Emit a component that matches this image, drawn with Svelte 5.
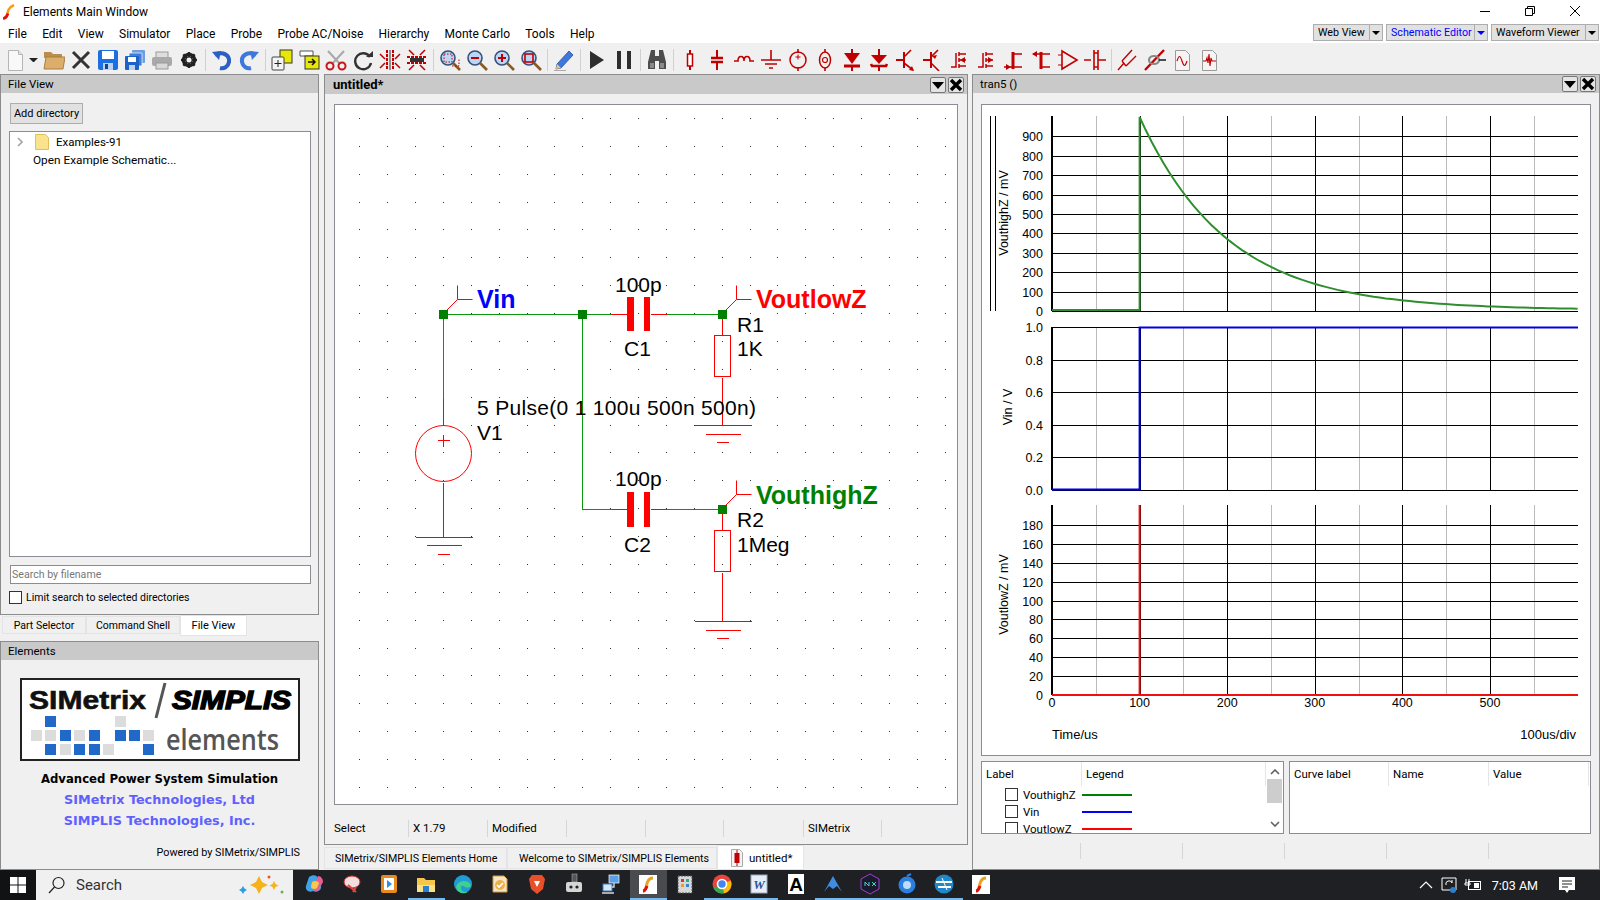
<script>
	const red = '#c00000';

	const toolIcons = {
		new: `<path d="M4.500 1.500h10l4 4v16h-14z" fill="#f8f8f8" stroke="#b5b5b5"/><path d="M14.500 1.500v4h4" fill="#e4e4e4" stroke="#b5b5b5"/>`,
		open: `<path d="M1 5V3h7l2 2h9v4H1z" fill="#b98f4f"/><path d="M1 20L3 8h19l-2 12z" fill="#dcae6b" stroke="#a97f43"/>`,
		close: `<path d="M3 3l16 16M19 3L3 19" stroke="#333" stroke-width="3"/>`,
		save: `<rect x="1" y="1" width="20" height="20" rx="2" fill="#1c6fe0"/><rect x="5" y="2" width="12" height="8" fill="#fff"/><rect x="6" y="14" width="10" height="7" fill="#bcd2ee"/><rect x="8" y="15" width="3" height="5" fill="#14418a"/>`,
		saveall: `<rect x="8" y="1" width="13" height="13" rx="1" fill="#6d9ee4"/><rect x="5" y="4" width="13" height="13" rx="1" fill="#3f7fd8" stroke="#fff" stroke-width=".7"/><rect x="1" y="7" width="14" height="14" rx="1" fill="#1c62c8"/><rect x="4" y="8" width="8" height="5" fill="#fff"/><rect x="5" y="16" width="6" height="5" fill="#bcd2ee"/>`,
		print: `<rect x="5" y="3" width="12" height="6" fill="#dedede" stroke="#999"/><rect x="1" y="8" width="20" height="9" rx="2" fill="#a9a9a9"/><rect x="5" y="14" width="12" height="6" fill="#d8d8d8" stroke="#999"/>`,
		gear: `<circle cx="11" cy="11" r="5.500" fill="none" stroke="#222" stroke-width="3.500"/><path d="M11 3v16M3 11h16M5.300 5.300l11.400 11.400M16.700 5.300L5.300 16.700" stroke="#222" stroke-width="2.400"/><circle cx="11" cy="11" r="2.500" fill="#f0f0f0"/>`,
		undo: `<path d="M4 6c8-4 15 0 14 7-1 5-5 7-9 6" fill="none" stroke="#2a5fc4" stroke-width="4"/><path d="M1 3l9-1-2 9z" fill="#2a5fc4"/>`,
		redo: `<path d="M18 6c-8-4-15 0-14 7 1 5 5 7 9 6" fill="none" stroke="#3f78dc" stroke-width="4"/><path d="M21 3l-9-1 2 9z" fill="#3f78dc"/>`,
		addpart: `<rect x="9" y="1" width="12" height="13" fill="#e8e800" stroke="#333"/><rect x="1" y="8" width="12" height="13" rx="1" fill="#f4f4f4" stroke="#444"/><path d="M7 11v7M3.500 14.500h7" stroke="#222"/>`,
		movepart: `<path d="M2 2h13v5H2z" fill="#fff" stroke="#555"/><rect x="7" y="7" width="14" height="13" fill="#e8e800" stroke="#333"/><path d="M10 13h6m-2-3l3 3-3 3" fill="none" stroke="#111" stroke-width="1.500"/>`,
		cut: `<path d="M3 2l12 13M19 2L7 15" stroke="#a8a8a8" stroke-width="2"/><circle cx="5" cy="17" r="3.500" fill="none" stroke="#c8161d" stroke-width="2"/><circle cx="17" cy="17" r="3.500" fill="none" stroke="#c8161d" stroke-width="2"/>`,
		rotate: `<path d="M18 8a8 8 0 1 0 1 6" fill="none" stroke="#333" stroke-width="2.400"/><path d="M14 8h7V2z" fill="#333"/>`,
		flipv: `<path d="M8 1v20M14 1v20" stroke="${red}" stroke-width="2" stroke-dasharray="3 1"/><path d="M1 5l5 5M1 19l5-5M21 5l-5 5M21 19l-5-5" stroke="${red}" stroke-width="1.500"/><path d="M11 1v20" stroke="#333"/>`,
		fliph: `<path d="M1 8h20M1 14h20" stroke="${red}" stroke-width="2" stroke-dasharray="3 1"/><path d="M3 1l5 5M19 1l-5 5M3 21l5-5M19 21l-5-5" stroke="${red}" stroke-width="1.500"/><rect x="4" y="9" width="14" height="4" fill="#333"/>`,
		zoomfit: `<circle cx="9" cy="9" r="7" fill="#bcd6f6" stroke="#36507a" stroke-width="1.600"/><path d="M14 14l7 7" stroke="#8a5a20" stroke-width="2.600"/><rect x="5" y="5" width="8" height="8" fill="none" stroke="${red}" stroke-dasharray="1.500 1.500"/><path d="M13 17h7V9" fill="none" stroke="${red}" stroke-dasharray="1.500 1.500"/>`,
		zoomout: `<circle cx="9" cy="9" r="7" fill="#bcd6f6" stroke="#36507a" stroke-width="1.600"/><path d="M14 14l7 7" stroke="#8a5a20" stroke-width="2.600"/><path d="M5 9h8" stroke="${red}" stroke-width="2"/>`,
		zoomin: `<circle cx="9" cy="9" r="7" fill="#bcd6f6" stroke="#36507a" stroke-width="1.600"/><path d="M14 14l7 7" stroke="#8a5a20" stroke-width="2.600"/><path d="M5 9h8M9 5v8" stroke="${red}" stroke-width="2"/>`,
		zoomarea: `<circle cx="9" cy="9" r="7" fill="#bcd6f6" stroke="#36507a" stroke-width="1.600"/><path d="M14 14l7 7" stroke="#8a5a20" stroke-width="2.600"/><rect x="5" y="5" width="8" height="8" fill="none" stroke="${red}" stroke-width="1.600"/>`,
		pencil: `<path d="M4 15L16 2l4 4L8 19l-5 1z" fill="#3f78dc" stroke="#274f97" stroke-width=".8"/><path d="M4 15l4 4-5 1z" fill="#e9c48c"/><path d="M1 21.500h12" stroke="#aaa"/>`,
		play: `<path d="M4 2l14 9-14 9z" fill="#2e2e2e"/>`,
		pause: `<path d="M4 2h4v18H4zM14 2h4v18h-4z" fill="#2e2e2e"/>`,
		find: `<path d="M5 1h4v6h4V1h4l3 12v7h-7v-8H9v8H2v-7z" fill="#4d4d4d"/><path d="M4 14h4v5H4zM14 14h4v5h-4z" fill="#8a8a8a"/>`,
		res: `<path d="M11 1v4M11 17v4" stroke="${red}" stroke-width="2"/><rect x="8.500" y="5" width="5" height="12" fill="#fff" stroke="${red}" stroke-width="1.500"/>`,
		cap: `<path d="M11 1v8M11 13v8" stroke="${red}" stroke-width="2"/><path d="M5 9h12M5 13h12" stroke="${red}" stroke-width="2.400"/>`,
		ind: `<path d="M1 12h4c0-6 6-6 6 0 0-6 6-6 6 0h4" fill="none" stroke="${red}" stroke-width="1.600"/>`,
		gnd: `<path d="M11 1v10M1 11h20M5 15h12M9 19h4" stroke="${red}" stroke-width="1.600"/>`,
		vsrc: `<path d="M11 0v4M11 18v4" stroke="${red}" stroke-width="1.600"/><circle cx="11" cy="11" r="8" fill="none" stroke="${red}" stroke-width="1.500"/><path d="M8.500 8h5M11 5.500v5" stroke="${red}"/>`,
		isrc: `<path d="M11 0v3M11 19v3" stroke="${red}" stroke-width="1.600"/><ellipse cx="11" cy="11" rx="5.500" ry="8" fill="none" stroke="${red}" stroke-width="1.500"/><circle cx="11" cy="11" r="2.500" fill="none" stroke="${red}" stroke-width="1.200"/>`,
		dio: `<path d="M11 0v4M11 17v5" stroke="${red}" stroke-width="2"/><path d="M3 4h16l-8 11z" fill="${red}"/><path d="M3 17h16" stroke="${red}" stroke-width="3"/>`,
		zen: `<path d="M11 0v6M11 17v5" stroke="${red}" stroke-width="2"/><path d="M3 6h16l-8 9z" fill="${red}"/><path d="M3 15l1 2h14l1-2" fill="none" stroke="${red}" stroke-width="2.600"/>`,
		npn: `<path d="M1 11h8M9 3v16" stroke="${red}" stroke-width="2"/><path d="M9 8l7-7M9 14l9 7" stroke="${red}" stroke-width="1.600"/><path d="M19 22l-5-1 3-4z" fill="${red}"/>`,
		pnp: `<path d="M1 11h8M9 3v16" stroke="${red}" stroke-width="2"/><path d="M9 8l7-7M9 14l8 8" stroke="${red}" stroke-width="1.600"/><path d="M10 7l5-1-2 4z" fill="${red}"/>`,
		nmos: `<path d="M2 18h5V4M10 3v4M10 9v4M10 15v4M10 5h7M10 17h7M10 11h7" stroke="${red}" stroke-width="1.500" fill="none"/><path d="M11 11l5-3v6z" fill="${red}"/>`,
		pmos: `<path d="M2 18h5V4M10 3v4M10 9v4M10 15v4M10 5h7M10 17h7M10 11h7" stroke="${red}" stroke-width="1.500" fill="none"/><path d="M17 11l-5-3v6z" fill="${red}"/>`,
		pjf: `<path d="M1 18h9M10 5h9M10 18h9" stroke="${red}" stroke-width="1.600" fill="none"/><path d="M10 3v17" stroke="${red}" stroke-width="3"/><path d="M8 18l-5-3v6z" fill="${red}"/>`,
		njf: `<path d="M3 5h8M11 5h9M11 18h9" stroke="${red}" stroke-width="1.600"/><path d="M11 3v17" stroke="${red}" stroke-width="3"/><path d="M2 5l5-3v6zM6 5v5" fill="${red}"/>`,
		amp: `<path d="M5 2l15 9-15 9z" fill="none" stroke="${red}" stroke-width="1.600"/><path d="M1 6h4M1 16h4" stroke="${red}" stroke-width="1.200"/>`,
		sw: `<path d="M0 11h7M10 1v20M14 1v20M14 11h8M10 4h4M10 18h4" stroke="${red}" stroke-width="1.600"/>`,
		probe: `<path d="M1 21l6-7M5 12L15 1M9 17L19 7M5 12l4 5" fill="none" stroke="${red}" stroke-width="1.400"/>`,
		probe2: `<path d="M1 21L20 1" stroke="${red}" stroke-width="2.400"/><ellipse cx="10" cy="11" rx="5" ry="4" fill="none" stroke="#888" stroke-width="2.200"/><path d="M15 11h7" stroke="#222" stroke-width="1.600"/>`,
		wave: `<path d="M4.500 1.500h10l4 4v16h-14z" fill="#f4f4f4" stroke="#9a9a9a"/><path d="M6 12c2-6 3-6 5 0s3 6 5 0" fill="none" stroke="${red}" stroke-width="1.200"/>`,
		fft: `<path d="M4.500 1.500h10l4 4v16h-14z" fill="#f4f4f4" stroke="#9a9a9a"/><path d="M5 12h3l1-3 1 5 1-9 1 12 1-8 1 3h4" fill="none" stroke="${red}" stroke-width="1.100"/>`
	};

	const toolbar = [
		'new', 'drop', 'gap', 'open', 'close', 'save', 'saveall', 'print', 'gear', '|',
		'undo', 'redo', '|',
		'addpart', 'movepart', 'cut', 'rotate', 'flipv', 'fliph', '|',
		'zoomfit', 'zoomout', 'zoomin', 'zoomarea', '|',
		'pencil', '|', 'play', 'pause', '|', 'find', '|',
		'res', 'cap', 'ind', 'gnd', 'vsrc', 'isrc', 'dio', 'zen', 'npn', 'pnp', 'nmos', 'pmos', 'pjf', 'njf', 'amp', 'sw', '|',
		'probe', 'probe2', 'wave', 'fft'
	];

	const menus = ['File', 'Edit', 'View', 'Simulator', 'Place', 'Probe', 'Probe AC/Noise', 'Hierarchy', 'Monte Carlo', 'Tools', 'Help'];

	// schematic, all in page coordinates (viewBox lines up with the page)
	const dots = [];
	for (let y = 118; y < 800; y += 27.87) {
		for (let x = 359.4; x < 950; x += 27.87) dots.push([Math.round(x), Math.round(y)]);
	}

	const greenWires = [
		[443, 314, 611, 314], [443, 314, 443, 398], [582, 314, 582, 509], [582, 509, 611, 509],
		[666, 314, 722, 314], [666, 509, 722, 509]
	];
	const redWires = [
		[611, 314, 628, 314], [650, 314, 666, 314], [611, 509, 628, 509], [650, 509, 666, 509],
		[443, 398, 443, 425], [443, 482, 443, 537],
		[415, 537, 472, 537], [426, 545, 461, 545], [437, 554, 449, 554], [437, 440, 449, 440], [443, 434, 443, 446],
		[722, 314, 722, 335], [722, 377, 722, 425], [694, 425, 751, 425], [705, 434, 740, 434], [716, 442, 728, 442],
		[722, 509, 722, 530], [722, 572, 722, 621], [694, 621, 751, 621], [705, 630, 740, 630], [716, 638, 728, 638]
	];
	const junctions = [[443, 314], [582, 314], [722, 314], [722, 509]];
	const flags = [[443, 314], [722, 314], [722, 509]];

	// plots
	const x0 = 1052;
	const xStep = 87.6;
	const xEnd = 1578;
	const plots = [
		{
			top: 116, bottom: 311, label: 'VouthighZ / mV', labelX: 1004, labelY: 213,
			ticks: [900, 800, 700, 600, 500, 400, 300, 200, 100, 0].map((v) => ({ v: String(v), y: 311 - v * 0.194 }))
		},
		{
			top: 327, bottom: 490, label: 'Vin / V', labelX: 1008, labelY: 407,
			ticks: [1, 0.8, 0.6, 0.4, 0.2, 0].map((v) => ({ v: v.toFixed(1), y: 490 - v * 163 }))
		},
		{
			top: 505, bottom: 695, label: 'VoutlowZ / mV', labelX: 1004, labelY: 594.5,
			ticks: [180, 160, 140, 120, 100, 80, 60, 40, 20, 0].map((v) => ({ v: String(v), y: 695 - v * 0.944 }))
		}
	];
	const majors = [0, 1, 2, 3, 4, 5].map((i) => x0 + i * xStep);
	const minors = [0, 1, 2, 3, 4, 5, 6].map((i) => x0 + (i - 0.5) * xStep).filter((x) => x > x0);

	const x100 = x0 + xStep;
	let decay = `M${x0} 310 L${x100} 310 L${x100} 117`;
	for (let x = x100; x <= xEnd; x += 6) {
		decay += ` L${x.toFixed(1)} ${(310 - 193 * Math.exp(-(x - x100) / xStep)).toFixed(1)}`;
	}

	const legend = [
		{ name: 'VouthighZ', color: '#008000' },
		{ name: 'Vin', color: '#0000ff' },
		{ name: 'VoutlowZ', color: '#ff0000' }
	];

	const logoSquares = [
		[25, 38, 1], [95, 38, 0],
		[11, 52, 0], [25, 52, 0], [40, 52, 1], [54, 52, 0], [69, 52, 1], [95, 52, 1], [109, 52, 1], [123, 52, 0],
		[25, 66, 1], [40, 66, 0], [54, 66, 1], [69, 66, 1], [83, 66, 0], [123, 66, 1]
	];

	const taskIcons = {
		copilot: `<path d="M5 4c4-3 8-2 9 1l3 8c1 4-4 7-8 5-4 2-8-1-7-5z" fill="#3fa3e8"/><path d="M14 3c3 0 5 3 5 6l-5 9c-3 1-5-1-5-3z" fill="#e9608f"/><path d="M8 9c3-2 6-1 7 1l-2 5c-2 2-5 1-6-1z" fill="#f7c948"/>`,
		a1: `<ellipse cx="11" cy="9" rx="8" ry="6" fill="#f3dede" stroke="#c33"/><path d="M7 12l8 7M15 14l-3 5" stroke="#d44" stroke-width="2"/>`,
		a2: `<rect x="3" y="2" width="16" height="18" rx="2" fill="#e88a1e"/><rect x="6" y="5" width="10" height="12" fill="#fff"/><path d="M9 7l5 4-5 4z" fill="#2a8fe0"/>`,
		files: `<path d="M2 5h7l2 2h9v12H2z" fill="#f6c64a"/><rect x="2" y="12" width="18" height="7" fill="#fbe08a"/><rect x="8" y="13" width="6" height="6" fill="#2a7fd0"/>`,
		edge: `<circle cx="11" cy="11" r="9" fill="#1f9bd6"/><path d="M4 14c2-7 12-8 15-2 0 3-4 3-6 2-2-2-5-2-4 2 1 3 5 4 8 2-4 4-11 3-13-4z" fill="#3fcf8e"/>`,
		mail: `<path d="M4 3h11l3 3v13H4z" fill="#f3e6c8" stroke="#d79a3c"/><circle cx="11" cy="12" r="5" fill="#e9b24a"/><path d="M8 12l2 2 4-4" stroke="#fff" stroke-width="1.600" fill="none"/>`,
		brave: `<path d="M6 2h10l3 4-2 10-6 5-6-5-2-10z" fill="#e8502a"/><path d="M8 8h6l-3 6z" fill="#fff"/>`,
		usb: `<rect x="9" y="1" width="5" height="8" fill="#555" stroke="#bbb" stroke-width=".5"/><rect x="3" y="9" width="16" height="10" rx="2" fill="#d5d5d5"/><circle cx="8" cy="14" r="1.600" fill="#222"/><circle cx="14" cy="14" r="1.600" fill="#222"/>`,
		net: `<rect x="9" y="2" width="10" height="8" fill="#5aa0e8" stroke="#fff" stroke-width=".7"/><rect x="3" y="11" width="9" height="7" fill="#d7e8fa" stroke="#3a7cc8"/><path d="M14 10v4h-2M2 20h12" stroke="#d8d8d8" stroke-width="1.400" fill="none"/>`,
		simetrix: `<rect x="2" y="2" width="18" height="19" fill="#fff"/><path d="M6 18c4-1 3-7 5-10 1-2 3-3 5-3" fill="none" stroke="#e8a21e" stroke-width="3"/><path d="M6 18c2 0 3-2 4-5" fill="none" stroke="#e01010" stroke-width="3"/>`,
		chip: `<rect x="4" y="3" width="14" height="17" fill="#d8d8d8" stroke="#555" stroke-dasharray="2 1"/><rect x="7" y="6" width="3" height="3" fill="#d33"/><rect x="12" y="6" width="3" height="3" fill="#3a8"/><rect x="7" y="11" width="3" height="3" fill="#e93"/><rect x="12" y="11" width="3" height="3" fill="#38c"/>`,
		chrome: `<circle cx="11" cy="11" r="9.500" fill="#e8453c"/><path d="M11 11L2.500 15A9.500 9.500 0 0 0 13 20.300z" fill="#34a853"/><path d="M11 11l8.800-3.500A9.500 9.500 0 0 1 13 20.300z" fill="#fbbc05"/><circle cx="11" cy="11" r="4.500" fill="#4285f4" stroke="#fff" stroke-width="1.600"/>`,
		word: `<rect x="3" y="2" width="16" height="18" fill="#e8eef8" stroke="#9ab"/><text x="11" y="16" text-anchor="middle" font-family="Liberation Serif" font-style="italic" font-weight="700" font-size="13" fill="#2a5699">W</text>`,
		ai: `<rect x="3" y="1" width="16" height="20" fill="#fff"/><text x="11" y="18" text-anchor="middle" font-family="Liberation Sans" font-weight="700" font-size="19" fill="#000">A</text>`,
		nord: `<path d="M2 19L11 3l9 16-5-6-4 3-4-3z" fill="#3f8de0"/>`,
		nox: `<path d="M11 1l9 5v10l-9 5-9-5V6z" fill="#1a1a2e" stroke="#a040d0"/><path d="M6 13v-4l4 4V9M13 9l4 4M17 9l-4 4" stroke="#30e0c0" fill="none"/>`,
		ball: `<circle cx="11" cy="12" r="8.500" fill="#2a7fe0"/><circle cx="11" cy="12" r="4" fill="#bcdcf8"/><path d="M11 3l4-2" stroke="#2a7fe0" stroke-width="2"/>`,
		ssh: `<circle cx="11" cy="11" r="9.500" fill="#1e88c8"/><path d="M3 9h16M5 14h13" stroke="#fff" stroke-width="2"/><path d="M9 5l5 12" stroke="#fff"/>`
	};
	const taskbar = [
		['copilot', false, false], ['a1', false, false], ['a2', false, false], ['files', true, false], ['edge', false, false],
		['mail', false, false], ['brave', false, false], ['usb', false, false], ['net', false, false], ['simetrix', true, true],
		['chip', false, false], ['chrome', true, false], ['word', true, false], ['ai', false, false], ['nord', true, false],
		['nox', true, false], ['ball', true, false], ['ssh', true, false], ['simetrix', false, false]
	];
</script>

<div class="app">
	<header class="titlebar">
		<svg class="app-logo" viewBox="0 0 14 16" width="14" height="16">
			<path d="M2 14c4-1 3-6 5-9 1-2 3-3 5-4" fill="none" stroke="#f0a020" stroke-width="2.600" />
			<path d="M1 14.500c3 0 4-2 5-5" fill="none" stroke="#e01010" stroke-width="2.600" />
		</svg>
		<span class="title-text">Elements Main Window</span>
		<div class="win-controls">
			<svg viewBox="0 0 10 10" width="10" height="10"><path d="M0 5.500h10" stroke="#000" /></svg>
			<svg viewBox="0 0 10 10" width="10" height="10"><path d="M.5 2.500h7v7h-7zM2.500 2.500v-2h7v7h-2" fill="none" stroke="#000" /></svg>
			<svg viewBox="0 0 10 10" width="10" height="10"><path d="M0 0l10 10M10 0L0 10" stroke="#000" /></svg>
		</div>
	</header>

	<nav class="menubar">
		{#each menus as m}
			<span>{m}</span>
		{/each}
		<div class="views">
			<div class="view-btn web"><span>Web View</span><i></i></div>
			<div class="view-btn sch active"><span>Schematic Editor</span><i></i></div>
			<div class="view-btn wav"><span>Waveform Viewer</span><i></i></div>
		</div>
	</nav>

	<div class="toolbar">
		{#each toolbar as t}
			{#if t === '|'}
				<div class="sep"><b></b></div>
			{:else if t === 'gap'}
				<div class="tb-gap"></div>
			{:else if t === 'drop'}
				<div class="drop"></div>
			{:else}
				<div class="tool">
					<svg viewBox="0 0 22 22" width="22" height="22">{@html toolIcons[t]}</svg>
				</div>
			{/if}
		{/each}
	</div>

	<main class="main">
		<section class="left">
			<div class="panel fileview">
				<div class="panel-title">File View</div>
				<button class="add-dir">Add directory</button>
				<div class="tree">
					<div class="tree-row">
						<svg class="chev" viewBox="0 0 6 10" width="6" height="10"><path d="M1 1l4 4-4 4" fill="none" stroke="#a6a6a6" stroke-width="1.600" /></svg>
						<svg class="folder" viewBox="0 0 14 16" width="14" height="16"><path d="M.5.5h10l3 3v12H.5z" fill="#fbe38e" stroke="#e0c05c" /></svg>
						<span>Examples-91</span>
					</div>
					<div class="tree-open">Open Example Schematic...</div>
				</div>
				<div class="search">Search by filename</div>
				<label class="limit"><span class="check"></span>Limit search to selected directories</label>
			</div>

			<div class="left-tabs">
				<div class="ltab part">Part Selector</div>
				<div class="ltab shell">Command Shell</div>
				<div class="ltab on">File View</div>
			</div>

			<div class="panel elements">
				<div class="panel-title">Elements</div>
				<svg class="logo" viewBox="0 0 280 83" width="280" height="83">
					<rect x="1" y="1" width="278" height="81" fill="#fff" stroke="#222" stroke-width="2" />
					<text x="9" y="31" class="logo-a" textLength="117" lengthAdjust="spacingAndGlyphs">SIMetrix</text>
					<path d="M145 5l-9 35" stroke="#555" stroke-width="3" />
					<text x="152" y="31" class="logo-b" textLength="119" lengthAdjust="spacingAndGlyphs">SIMPLIS</text>
					{#each logoSquares as [x, y, on]}
						<rect {x} {y} width="11" height="11" fill={on ? '#2169c8' : '#dcdcdc'} />
					{/each}
					<text x="146" y="71.500" class="logo-c" textLength="113" lengthAdjust="spacingAndGlyphs">elements</text>
				</svg>
				<div class="tag bold">Advanced Power System Simulation</div>
				<div class="tag blue">SIMetrix Technologies, Ltd</div>
				<div class="tag blue second">SIMPLIS Technologies, Inc.</div>
				<div class="powered">Powered by SIMetrix/SIMPLIS</div>
			</div>
		</section>

		<section class="center">
			<div class="panel sch-panel">
				<div class="panel-title strong">
					<span>untitled*</span>
					<div class="dock">
						<span class="dock-btn"><svg viewBox="0 0 14 14" width="14" height="14"><path d="M1 4h12l-6 7z" fill="#000" /></svg></span>
						<span class="dock-btn"><svg viewBox="0 0 14 14" width="14" height="14"><path d="M2 2l10 10M12 2L2 12" stroke="#000" stroke-width="3.400" /></svg></span>
					</div>
				</div>
				<svg class="sch-canvas" viewBox="335 105 622 699" width="624" height="701">
					<g fill="#333">
						{#each dots as [x, y]}
							<rect {x} {y} width="1" height="1" />
						{/each}
					</g>
					<g shape-rendering="crispEdges">
						{#each greenWires as [x1, y1, x2, y2]}
							<line x1={x1 + 0.5} y1={y1 + 0.5} x2={x2 + 0.5} y2={y2 + 0.5} stroke="#0a960a" />
						{/each}
						{#each redWires as [x1, y1, x2, y2]}
							<line x1={x1 + 0.5} y1={y1 + 0.5} x2={x2 + 0.5} y2={y2 + 0.5} stroke="#f00" />
						{/each}
						<rect x="627" y="297" width="7" height="34" fill="#f00" />
						<rect x="644" y="297" width="6" height="34" fill="#f00" />
						<rect x="627" y="492" width="7" height="35" fill="#f00" />
						<rect x="644" y="492" width="6" height="35" fill="#f00" />
						<rect x="714.5" y="335.5" width="16" height="41" fill="none" stroke="#f00" />
						<rect x="714.5" y="530.5" width="16" height="41" fill="none" stroke="#f00" />
						{#each flags as [x, y]}
							<path d="M{x + 0.5} {y - 0.5}l14 -14h15M{x + 14.5} {y - 14.5}v-14" fill="none" stroke="#f00" shape-rendering="auto" />
						{/each}
						{#each junctions as [x, y]}
							<rect x={x - 4} y={y - 4} width="9" height="9" fill="#008000" />
						{/each}
					</g>
					<circle cx="443.5" cy="453.5" r="28" fill="none" stroke="#f00" />
					<g class="sch-text">
						<text x="615" y="292">100p</text>
						<text x="624" y="356">C1</text>
						<text x="737" y="332">R1</text>
						<text x="737" y="356">1K</text>
						<text x="477" y="415" textLength="279">5 Pulse(0 1 100u 500n 500n)</text>
						<text x="477" y="440">V1</text>
						<text x="615" y="486">100p</text>
						<text x="624" y="552">C2</text>
						<text x="737" y="527">R2</text>
						<text x="737" y="552">1Meg</text>
					</g>
					<g class="net-text">
						<text x="477" y="308" fill="#00f">Vin</text>
						<text x="756" y="308" fill="#f00">VoutlowZ</text>
						<text x="756" y="504" fill="#008000">VouthighZ</text>
					</g>
				</svg>
				<div class="statusbar">
					<span style="width:75px">Select</span>
					<span style="width:79px">X 1.79</span>
					<span style="width:79px">Modified</span>
					<span style="width:79px"></span>
					<span style="width:78px"></span>
					<span style="width:80px"></span>
					<span style="width:78px">SIMetrix</span>
				</div>
			</div>
			<div class="doc-tabs">
				<div class="dtab home">SIMetrix/SIMPLIS Elements Home</div>
				<div class="dtab welcome">Welcome to SIMetrix/SIMPLIS Elements</div>
				<div class="dtab on">
					<svg viewBox="0 0 14 18" width="14" height="18">
						<path d="M1.500.5h8l3 3v14h-11z" fill="#f4f4f4" stroke="#aaa" />
						<path d="M7 1v16" stroke="#c00000" /><rect x="4.500" y="4" width="5" height="10" fill="#c00000" />
					</svg>
					<span>untitled*</span>
				</div>
			</div>
		</section>

		<section class="panel right">
			<div class="panel-title">
				<span>tran5 ()</span>
				<div class="dock">
					<span class="dock-btn"><svg viewBox="0 0 14 14" width="14" height="14"><path d="M1 4h12l-6 7z" fill="#000" /></svg></span>
					<span class="dock-btn"><svg viewBox="0 0 14 14" width="14" height="14"><path d="M2 2l10 10M12 2L2 12" stroke="#000" stroke-width="3.400" /></svg></span>
				</div>
			</div>
			<svg class="plot" viewBox="982 105 608 650" width="610" height="652">
				<g shape-rendering="crispEdges">
					<path d="M990.5 116v195M995.5 116v195" stroke="#000" fill="none" />
					{#each plots as p}
						{#each minors as x}
							<line x1={Math.round(x) + 0.5} x2={Math.round(x) + 0.5} y1={p.top} y2={p.bottom} stroke="#bbb" />
						{/each}
						{#each majors as x}
							<line x1={Math.round(x) + 0.5} x2={Math.round(x) + 0.5} y1={p.top} y2={p.bottom} stroke="#000" />
						{/each}
						{#each p.ticks as t}
							<line x1={x0} x2={xEnd} y1={Math.round(t.y) + 0.5} y2={Math.round(t.y) + 0.5} stroke="#000" />
						{/each}
						<rect x={x0 - 1} y={p.top} width="2" height={p.bottom - p.top} fill="#000" />
					{/each}
				</g>
				{#each plots as p}
					{#each p.ticks as t}
						<text class="ax" x="1043" y={t.y + 5} text-anchor="end">{t.v}</text>
					{/each}
					<text class="ax" text-anchor="middle" transform="translate({p.labelX + 4} {p.labelY}) rotate(-90)">{p.label}</text>
				{/each}
				<path d={decay} fill="none" stroke="#2f8f2f" stroke-width="2" />
				<path d="M{x0} 489.5H{x100}V327.5H{xEnd}" fill="none" stroke="#0000e0" stroke-width="2" />
				<path d="M{x0} 695H{xEnd}M{x100} 695V505" fill="none" stroke="#f01010" stroke-width="2" />
				{#each majors as x, i}
					<text class="ax" {x} y="707" text-anchor="middle">{i * 100}</text>
				{/each}
				<text class="ax big" x="1052" y="739">Time/us</text>
				<text class="ax big" x="1576" y="739" text-anchor="end">100us/div</text>
			</svg>
			<div class="tables">
				<div class="table legend">
					<div class="t-head">
						<span class="c-label">Label</span>
						<span class="c-legend">Legend</span>
						<span class="scroll-gap"></span>
					</div>
					{#each legend as l}
						<div class="l-row">
							<span class="check"></span>
							<span class="l-name">{l.name}</span>
							<b style="background:{l.color}"></b>
						</div>
					{/each}
					<div class="scrollbar">
						<svg viewBox="0 0 10 6" width="10" height="6"><path d="M1 5l4-4 4 4" fill="none" stroke="#606060" stroke-width="1.600" /></svg>
						<i></i>
						<svg class="down" viewBox="0 0 10 6" width="10" height="6"><path d="M1 1l4 4 4-4" fill="none" stroke="#606060" stroke-width="1.600" /></svg>
					</div>
				</div>
				<div class="table curves">
					<div class="t-head">
						<span class="c-a">Curve label</span>
						<span class="c-b">Name</span>
						<span class="c-c">Value</span>
					</div>
				</div>
			</div>
			<div class="r-status">
				<span></span><span></span><span></span><span></span><span></span>
			</div>
		</section>
	</main>

	<footer class="taskbar">
		<div class="start">
			<svg viewBox="0 0 16 16" width="16" height="16"><path d="M0 0h7.500v7.500H0zM8.500 0H16v7.500H8.500zM0 8.500h7.500V16H0zM8.500 8.500H16V16H8.500z" fill="#fff" /></svg>
		</div>
		<div class="t-search">
			<svg viewBox="0 0 18 18" width="18" height="18"><circle cx="10.500" cy="7" r="5.500" fill="none" stroke="#222" stroke-width="1.200" /><path d="M6.500 11L1 17" stroke="#222" stroke-width="1.200" /></svg>
			<span>Search</span>
			<svg class="sparkle" viewBox="0 0 46 22" width="46" height="22">
				<path d="M20 2l3 6 6 3-6 3-3 6-3-6-6-3 6-3z" fill="#f5b21a" />
				<path d="M35 7l1.500 3 3 1.500-3 1.500-1.500 3-1.500-3-3-1.500 3-1.500z" fill="#f5b21a" />
				<path d="M4 12l1.500 2.500 2.500 1.500-2.500 1.500-1.500 2.500-1.500-2.500-2.500-1.500 2.500-1.500z" fill="#2a9fe0" />
				<circle cx="30" cy="3" r="1.500" fill="#e8552a" />
				<circle cx="43" cy="18" r="1.500" fill="#6ab04c" />
			</svg>
		</div>
		<div class="t-icons">
			{#each taskbar as [icon, running, active]}
				<div class="t-icon" class:running class:active>
					<svg viewBox="0 0 22 22" width="22" height="22">{@html taskIcons[icon]}</svg>
				</div>
			{/each}
		</div>
		<div class="tray">
			<svg viewBox="0 0 14 8" width="14" height="8"><path d="M1 7l6-6 6 6" fill="none" stroke="#fff" stroke-width="1.200" /></svg>
			<svg class="tray-net" viewBox="0 0 18 18" width="18" height="18"><path d="M2 2h14v12H2z" fill="none" stroke="#fff" /><path d="M6 9a3 3 0 0 1 6-2M12 7V4" fill="none" stroke="#fff" /><circle cx="13" cy="14" r="3" fill="#2a7fd0" /></svg>
			<svg class="tray-bat" viewBox="0 0 18 14" width="18" height="14"><rect x="4.500" y="3.500" width="12" height="8" fill="none" stroke="#fff" /><rect x="10" y="5" width="5" height="5" fill="#fff" /><path d="M2 1v4M5 1v4M1 5h5v2H1z" stroke="#fff" fill="none" /></svg>
			<span class="clock">7:03 AM</span>
			<svg class="notify" viewBox="0 0 18 18" width="18" height="18"><path d="M1 1h16v13h-6l-2 3-2-3H1z" fill="#fff" /><path d="M4 5h10M4 8h10M4 11h6" stroke="#222" /></svg>
		</div>
	</footer>
</div>

<style>
	:global(body) {
		margin: 0;
		background: #f0f0f0;
	}

	.app {
		width: 1600px;
		height: 900px;
		display: flex;
		flex-direction: column;
		overflow: hidden;
		font-family: Roboto, 'Liberation Sans', sans-serif;
		font-size: 11.5px;
		color: #000;
		white-space: nowrap;
	}

	.titlebar {
		height: 22px;
		box-sizing: border-box;
		padding-top: 1px;
		background: #fff;
		display: flex;
		align-items: center;
		padding-left: 2px;
	}

	.app-logo {
		margin-right: 7px;
	}

	.title-text {
		font-size: 12px;
	}

	.win-controls {
		margin-left: auto;
		display: flex;
		gap: 35px;
		padding-right: 20px;
		margin-top: -1px;
	}

	.menubar {
		height: 21px;
		box-sizing: border-box;
		padding-top: 2px;
		background: #fff;
		display: flex;
		align-items: center;
		gap: 15.3px;
		padding-left: 8px;
		font-size: 12px;
	}

	.views {
		margin-left: auto;
		display: flex;
		gap: 3px;
		margin-right: 1px;
		margin-top: -2px;
		font-size: 10.7px;
	}

	.view-btn {
		height: 17px;
		box-sizing: border-box;
		border: 1px solid #adadad;
		background: #e1e1e1;
		display: flex;
		align-items: center;
		justify-content: space-between;
		padding-left: 4px;
	}

	.view-btn.web {
		width: 70px;
	}
	.view-btn.sch {
		width: 102px;
		color: #0000ff;
	}
	.view-btn.wav {
		width: 108px;
	}

	.view-btn i {
		width: 12px;
		height: 15px;
		border-left: 1px solid #adadad;
		position: relative;
	}

	.view-btn i::after {
		content: '';
		position: absolute;
		left: 2px;
		top: 6px;
		border: 4px solid transparent;
		border-top: 4px solid #000;
	}

	.view-btn.sch i::after {
		border-top-color: #0000ff;
	}

	.toolbar {
		height: 31px;
		box-sizing: border-box;
		padding-top: 2px;
		background: #f0f0f0;
		display: flex;
		align-items: center;
		padding-left: 1.5px;
	}

	.tool {
		width: 27px;
		height: 22px;
		display: flex;
		justify-content: center;
		flex: none;
	}

	.drop {
		width: 9px;
		flex: none;
		height: 0;
		box-sizing: border-box;
		border: 4px solid transparent;
		border-top-color: #222;
		margin-top: 4px;
	}

	.tb-gap {
		width: 3px;
		flex: none;
	}

	.sep {
		width: 6px;
		flex: none;
		display: flex;
		justify-content: center;
	}

	.sep b {
		width: 1px;
		height: 22px;
		background: #d0d0d0;
	}

	.main {
		height: 796px;
		display: flex;
		gap: 4px;
		background: #f0f0f0;
	}

	.panel {
		box-sizing: border-box;
		border: 1px solid #8c8c8c;
		background: #f0f0f0;
	}

	.panel-title {
		height: 18px;
		background: #c9c9c9;
		display: flex;
		align-items: center;
		align-self: stretch;
		padding-left: 7px;
		font-size: 11.5px;
	}

	.panel-title.strong {
		height: 19px;
		font-weight: 700;
		font-size: 13px;
		padding-left: 8px;
	}

	.dock {
		margin-left: auto;
		display: flex;
		gap: 2px;
		padding-right: 3px;
	}

	.dock-btn {
		width: 16px;
		height: 16px;
		box-sizing: border-box;
		border: 1px solid #777;
		border-radius: 2px;
		background: #e4e4e4;
		display: flex;
		align-items: center;
		justify-content: center;
	}

	.left {
		width: 319px;
		margin-right: 1px;
		display: flex;
		flex-direction: column;
	}

	.fileview {
		height: 541px;
		display: flex;
		flex-direction: column;
		align-items: flex-start;
	}

	.add-dir {
		margin: 10px 0 0 9px;
		height: 21px;
		width: 73px;
		padding: 0;
		box-sizing: border-box;
		border: 1px solid #adadad;
		background: #e1e1e1;
		font: inherit;
		font-size: 11px;
	}

	.tree {
		margin: 7px 0 0 8px;
		width: 302px;
		height: 426px;
		box-sizing: border-box;
		border: 1px solid #8c8c95;
		background: #fff;
	}

	.tree-row {
		display: flex;
		align-items: center;
		height: 20px;
		padding: 0 0 0 7px;
		box-sizing: border-box;
	}

	.chev {
		margin-right: 12px;
	}

	.folder {
		margin-right: 7px;
	}

	.tree-open {
		padding-left: 23px;
		line-height: 17px;
		font-size: 11.8px;
	}

	.search {
		margin: 8px 0 0 9px;
		width: 301px;
		height: 19px;
		box-sizing: border-box;
		border: 1px solid #8c8c95;
		background: #fff;
		color: #777;
		padding-left: 1px;
		line-height: 17px;
		font-size: 10.6px;
	}

	.limit {
		margin: 7px 0 0 8px;
		display: flex;
		align-items: center;
		gap: 4px;
		font-size: 10.5px;
	}

	.check {
		width: 13px;
		height: 13px;
		box-sizing: border-box;
		border: 1px solid #333;
		background: #fff;
		flex: none;
	}

	.left-tabs {
		height: 26px;
		display: flex;
		align-items: flex-start;
		padding-left: 2px;
		box-sizing: border-box;
		font-size: 10.5px;
	}

	.ltab {
		height: 18px;
		margin-top: 1px;
		box-sizing: border-box;
		border: 1px solid #e4e4e4;
		display: flex;
		align-items: center;
		justify-content: center;
	}

	.ltab.part {
		width: 84px;
	}

	.ltab.shell {
		width: 94px;
	}

	.ltab.on {
		width: 67px;
		height: 21px;
		margin-top: 0;
		background: #fff;
		font-size: 11px;
	}

	.elements {
		height: 229px;
		display: flex;
		flex-direction: column;
		align-items: center;
	}

	.logo {
		margin-top: 18px;
		flex: none;
	}

	.logo-a {
		font: 700 26px 'Liberation Sans', sans-serif;
		fill: #111;
		stroke: #111;
		stroke-width: 0.6px;
	}

	.logo-b {
		font: italic 700 26px 'Liberation Sans', sans-serif;
		fill: #000;
		stroke: #000;
		stroke-width: 1.4px;
	}

	.logo-c {
		font: 600 29px 'Open Sans', sans-serif;
		fill: #555;
	}

	.tag {
		font-family: 'DejaVu Sans', sans-serif;
		text-align: center;
		height: 21px;
		line-height: 21px;
	}

	.tag.bold {
		margin-top: 9px;
		height: 19px;
		line-height: 19px;
		font-weight: 700;
		font-size: 11.7px;
	}

	.tag.blue {
		color: #6060ff;
		font-weight: 700;
		font-size: 12.8px;
	}

	.powered {
		align-self: flex-end;
		margin: 15px 18px 0 0;
		font-size: 10.8px;
	}

	.center {
		width: 644px;
		display: flex;
		flex-direction: column;
	}

	.sch-panel {
		height: 771px;
		display: flex;
		flex-direction: column;
	}

	.sch-canvas {
		margin: 10px 0 0 9px;
		box-sizing: border-box;
		border: 1px solid #8c8c95;
		background: #fff;
		flex: none;
	}

	.sch-text text {
		font: 21px 'Liberation Sans', sans-serif;
		fill: #000;
	}

	.net-text text {
		font: 700 25px 'Liberation Sans', sans-serif;
	}

	.statusbar {
		display: flex;
		margin: 15px 0 0 9px;
	}

	.statusbar span {
		height: 17px;
		line-height: 17px;
		box-sizing: border-box;
		border-right: 1px solid #d6d6d6;
		padding-left: 0;
	}

	.statusbar span + span {
		padding-left: 4px;
	}

	.doc-tabs {
		height: 25px;
		display: flex;
		align-items: flex-start;
		font-size: 10.7px;
	}

	.dtab {
		height: 22px;
		margin-top: 2px;
		box-sizing: border-box;
		border: 1px solid #e4e4e4;
		display: flex;
		align-items: center;
		padding-left: 10px;
	}

	.dtab.home {
		width: 183px;
	}

	.dtab.welcome {
		width: 210px;
		padding-left: 11px;
	}

	.dtab.on {
		width: 87px;
		height: 25px;
		margin-top: 0;
		background: #fff;
		gap: 5px;
		padding-left: 12px;
		font-size: 11.5px;
	}

	.right {
		width: 628px;
		display: flex;
		flex-direction: column;
	}

	.plot {
		margin: 11px 0 0 8px;
		box-sizing: border-box;
		border: 1px solid #8c8c95;
		background: #fff;
		flex: none;
	}

	.ax {
		font: 12.5px 'Liberation Sans', sans-serif;
		fill: #000;
	}

	.ax.big {
		font-size: 13px;
	}

	.tables {
		display: flex;
		gap: 5px;
		margin: 5px 0 0 8px;
	}

	.table {
		position: relative;
		height: 73px;
		box-sizing: border-box;
		border: 1px solid #8c8c95;
		background: #fff;
		overflow: hidden;
		font-size: 11.5px;
	}

	.legend {
		width: 303px;
	}

	.curves {
		width: 302px;
	}

	.t-head {
		display: flex;
		height: 24px;
		align-items: center;
	}

	.t-head span {
		box-sizing: border-box;
		height: 24px;
		line-height: 24px;
		padding-left: 4px;
		border-right: 1px solid #e6e6e6;
		flex: none;
	}

	.c-label {
		width: 100px;
	}
	.c-legend {
		width: 184px;
	}
	.c-a {
		width: 99px;
	}
	.c-b,
	.c-c {
		width: 100px;
	}

	.l-row {
		display: flex;
		align-items: center;
		height: 17px;
		padding-left: 23px;
	}

	.l-name {
		margin-left: 5px;
		width: 59px;
		flex: none;
	}

	.l-row b {
		width: 50px;
		height: 2px;
	}

	.scrollbar {
		position: absolute;
		right: 0;
		top: 0;
		bottom: 0;
		width: 17px;
		background: #fff;
		display: flex;
		flex-direction: column;
		align-items: center;
		padding-top: 7px;
		box-sizing: border-box;
	}

	.scrollbar i {
		width: 15px;
		height: 24px;
		margin-top: 4px;
		background: #cdcdcd;
	}

	.scrollbar .down {
		margin-top: auto;
		margin-bottom: 6px;
	}

	.r-status {
		display: flex;
		margin: 9px 0 0 8px;
	}

	.r-status span {
		width: 102px;
		height: 16px;
		box-sizing: border-box;
		border-right: 1px solid #d6d6d6;
	}

	.r-status span:first-child {
		width: 100px;
	}

	.taskbar {
		height: 30px;
		background: #1f2024;
		display: flex;
		align-items: stretch;
	}

	.start {
		width: 36px;
		display: flex;
		align-items: center;
		justify-content: center;
		background: #111214;
		flex: none;
	}

	.t-search {
		width: 257px;
		background: #f0f0f0;
		display: flex;
		align-items: center;
		padding-left: 12px;
		box-sizing: border-box;
		font-size: 15px;
		color: #333;
		flex: none;
	}

	.t-search span {
		margin-left: 10px;
	}

	.sparkle {
		margin-left: auto;
		margin-right: 8px;
	}

	.t-icons {
		display: flex;
		padding-left: 3.500px;
	}

	.t-icon {
		width: 37px;
		display: flex;
		align-items: center;
		justify-content: center;
		box-sizing: border-box;
		border-bottom: 2px solid transparent;
	}

	.t-icon.running {
		border-bottom-color: #76b9ed;
	}

	.t-icon.active {
		background: #4a4b4f;
	}

	.tray {
		margin-left: auto;
		display: flex;
		align-items: center;
		padding-right: 24px;
		color: #fff;
		font-size: 12.5px;
	}

	.tray-net {
		margin-left: 7px;
	}

	.tray-bat {
		margin-left: 6px;
	}

	.clock {
		margin-left: 10px;
	}

	.notify {
		margin-left: 20px;
	}
</style>
